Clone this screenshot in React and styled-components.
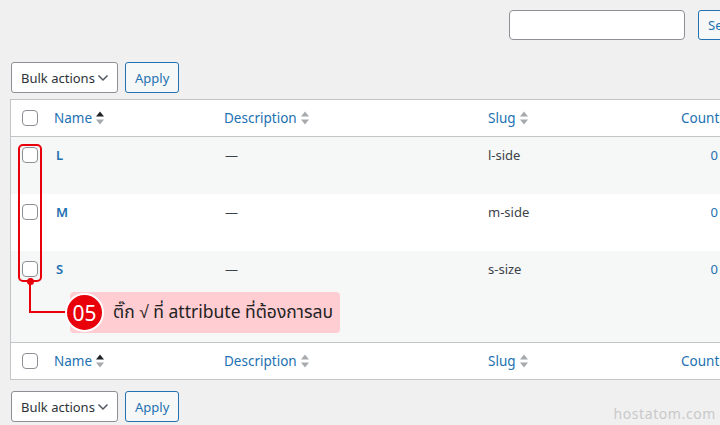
import styled, { createGlobalStyle } from "styled-components";

const Global = createGlobalStyle`
  *{ box-sizing: border-box; margin: 0; padding: 0; }
  html, body{ width: 720px; height: 425px; overflow: hidden; }
  body{
    background: #f0f0f1;
    font-family: "Noto Sans", "Noto Sans Thai", sans-serif;
    font-size: 13px;
    color: #3c434a;
  }
`;

const Page = styled.div`
  position: relative;
  width: 720px;
  height: 425px;
  overflow: hidden;
  padding: 10px 0 0 10px;
`;

const SearchBar = styled.div`
  display: flex;
  gap: 13px;
  margin-left: 499px;
  height: 30px;
`;

const SearchInput = styled.div`
  width: 176px;
  height: 30px;
  flex-shrink: 0;
  background: #fff;
  border: 1px solid #8c8f94;
  border-radius: 4px;
`;

const Button = styled.div`
  height: ${(p) => (p.$h ? p.$h : 31)}px;
  padding: 0 ${(p) => (p.$pad ? p.$pad : 9)}px;
  display: flex;
  align-items: center;
  border: 1px solid #2271b1;
  border-radius: 3px;
  background: #f6f7f7;
  color: #2271b1;
  white-space: nowrap;
  flex-shrink: 0;
`;

const Actions = styled.div`
  display: flex;
  gap: 7px;
  margin: ${(p) => p.$margin};
  padding-left: 1px;
`;

const Select = styled.div`
  width: 107px;
  height: 31px;
  padding: 0 8px 0 9px;
  display: flex;
  align-items: center;
  justify-content: space-between;
  background: #fff;
  border: 1px solid #8c8f94;
  border-radius: 3px;
  color: #2c3338;
`;

const Table = styled.div`
  width: 740px;
  background: #fff;
  border: 1px solid #c3c4c7;
`;

const Row = styled.div`
  display: grid;
  grid-template-columns: 34px 169px 264px 193px 60px;
  height: ${(p) => p.$h}px;
  background: ${(p) => (p.$alt ? "#f6f7f7" : "#fff")};
  border-bottom: ${(p) => (p.$line ? "1px solid #c3c4c7" : "none")};
  border-top: ${(p) => (p.$top ? "1px solid #c3c4c7" : "none")};
`;

const HeadCell = styled.div`
  display: flex;
  align-items: center;
  gap: 3px;
  padding-left: ${(p) => (p.$pl !== undefined ? p.$pl : 10)}px;
  color: #2271b1;
  font-size: 13.5px;
`;

const Cell = styled.div`
  padding: 9px 0 0 ${(p) => (p.$pl !== undefined ? p.$pl : 10)}px;
  line-height: 19px;
  color: ${(p) => p.$color || "#3c434a"};
  font-weight: ${(p) => (p.$bold ? 600 : 400)};
  text-align: ${(p) => (p.$right ? "right" : "left")};
  padding-right: ${(p) => (p.$right ? 13 : 0)}px;
`;

const Check = styled.div`
  width: 16px;
  height: 16px;
  margin: ${(p) => p.$m || "0"};
  background: #fff;
  border: 1px solid #8c8f94;
  border-radius: 4px;
`;

const Outline = styled.div`
  position: absolute;
  left: 18px;
  top: 144px;
  width: 24px;
  height: 138px;
  border: 2px solid #e8000b;
  border-radius: 5px;
`;

const Dot = styled.div`
  position: absolute;
  left: 27px;
  top: 278px;
  width: 7px;
  height: 7px;
  border-radius: 50%;
  background: #e8000b;
`;

const Leader = styled.div`
  position: absolute;
  left: 29px;
  top: 282px;
  width: 44px;
  height: 31px;
  border-left: 2px solid #e8000b;
  border-bottom: 2px solid #e8000b;
`;

const Label = styled.div`
  position: absolute;
  left: 70px;
  top: 292px;
  width: 270px;
  height: 41px;
  padding-left: 43px;
  display: flex;
  align-items: center;
  background: #ffcdd2;
  border-radius: 4px;
  color: #222;
  font-size: 17.5px;
  font-family: "Noto Sans Thai", "Noto Sans", sans-serif;
  white-space: nowrap;
`;

const Badge = styled.div`
  position: absolute;
  left: 65px;
  top: 293px;
  width: 39px;
  height: 39px;
  border-radius: 50%;
  background: #e8000b;
  border: 2px solid #fff;
  color: #fff;
  font-size: 21px;
  font-weight: 400;
  display: flex;
  align-items: center;
  justify-content: center;
`;

const Watermark = styled.div`
  position: absolute;
  right: 4px;
  bottom: 2px;
  color: #c9c9c9;
  font-size: 14px;
  letter-spacing: 0.6px;
`;

function Sort({ active }) {
  return (
    <svg width="10" height="16" viewBox="0 0 10 16">
      <path d="M1 6.5 L5 1.5 L9 6.5 Z" fill={active ? "#1d2327" : "#a7aaad"} />
      <path d="M1 9.5 L5 14.5 L9 9.5 Z" fill="#a7aaad" />
    </svg>
  );
}

function Chevron() {
  return (
    <svg width="12" height="8" viewBox="0 0 12 8">
      <path d="M1.5 1.5 L6 6 L10.5 1.5" fill="none" stroke="#50575e" strokeWidth="1.5" />
    </svg>
  );
}

function HeaderRow({ top }) {
  return (
    <Row $h={37} $line={top} $top={!top}>
      <HeadCell $pl={11}><Check /></HeadCell>
      <HeadCell $pl={9}>Name <Sort active /></HeadCell>
      <HeadCell>Description <Sort /></HeadCell>
      <HeadCell>Slug <Sort /></HeadCell>
      <HeadCell>Count</HeadCell>
    </Row>
  );
}

const rows = [
  { name: "L", slug: "l-side", h: 57, alt: true },
  { name: "M", slug: "m-side", h: 57, alt: false },
  { name: "S", slug: "s-size", h: 91, alt: true },
];

function BulkBar({ margin }) {
  return (
    <Actions $margin={margin}>
      <Select>Bulk actions <Chevron /></Select>
      <Button>Apply</Button>
    </Actions>
  );
}

export default function App() {
  return (
    <Page>
      <Global />
      <SearchBar>
        <SearchInput />
        <Button $h={30}>Search Attributes</Button>
      </SearchBar>
      <BulkBar margin="22px 0 6px 0" />
      <Table>
        <HeaderRow top />
        {rows.map((r) => (
          <Row key={r.name} $h={r.h} $alt={r.alt}>
            <Cell $pl={11}><Check $m="1px 0 0 0" /></Cell>
            <Cell $pl={11} $bold $color="#2271b1">{r.name}</Cell>
            <Cell $pl={11}>—</Cell>
            <Cell>{r.slug}</Cell>
            <Cell $right $color="#2271b1">0</Cell>
          </Row>
        ))}
        <HeaderRow />
      </Table>
      <BulkBar margin="11px 0 0 0" />

      <Outline />
      <Dot />
      <Leader />
      <Label>ติ๊ก √ ที่ attribute ที่ต้องการลบ</Label>
      <Badge>05</Badge>
      <Watermark>hostatom.com</Watermark>
    </Page>
  );
}
